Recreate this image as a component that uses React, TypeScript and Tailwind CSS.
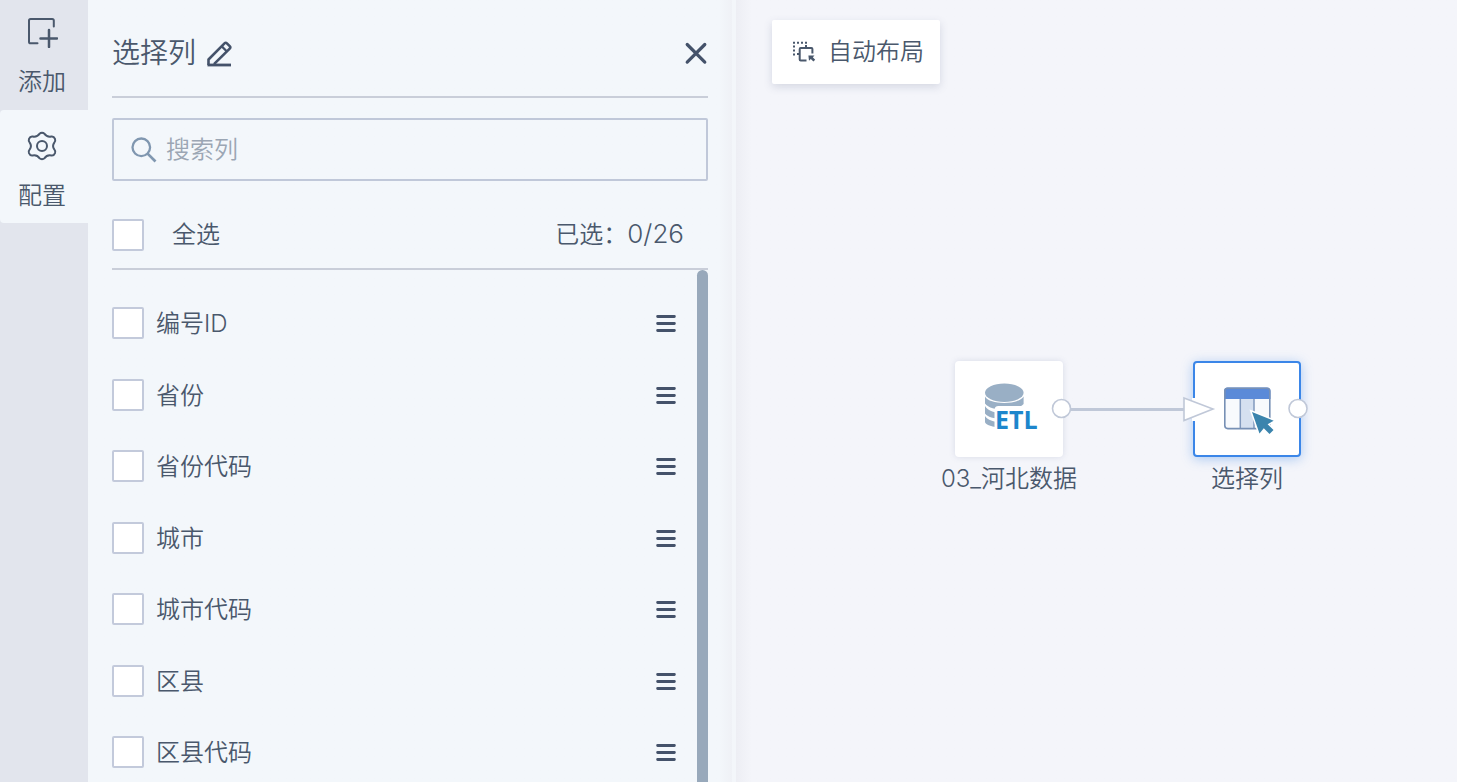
import { useState } from 'react';
import type { ReactNode } from 'react';

const columns = ['编号ID', '省份', '省份代码', '城市', '城市代码', '区县', '区县代码'];
const TOTAL = 26;

const checkboxClass =
  'size-8 shrink-0 appearance-none rounded-xs border-2 border-[#c3cadb] bg-white checked:border-[#2f80ed] checked:bg-[#2f80ed]';

const AddIcon = () => (
  <svg className="size-8" viewBox="0 0 32 32" fill="none" stroke="#4a586c" strokeLinecap="round">
    <path d="M11.5 27.3H4.6Q3 27.3 3 25.7V4.5Q3 2.9 4.6 2.9H26.2Q27.8 2.9 27.8 4.5V10.6" strokeWidth="2" />
    <path d="M23 14V31M14.5 22.4H31" strokeWidth="2.5" />
  </svg>
);

const GearIcon = () => (
  <svg className="size-8" viewBox="0 0 32 32" fill="none" stroke="#4a586c" strokeWidth="2" strokeLinejoin="round">
    <path d="M13.7 3.600C14.7 2.500 17.3 2.500 18.3 3.600C20.1 6.100 22.3 7.100 25.3 6.500C27 6.200 28.2 7 29 8.900C29.600 10.500 29.300 11.500 28.300 12.600C26.700 14.800 26.700 17.200 28.300 19.400C29.300 20.500 29.600 21.500 29 23.100C28.200 25 27 25.800 25.300 25.500C22.300 24.900 20.100 25.900 18.300 28.400C17.300 29.500 14.700 29.500 13.700 28.400C11.900 25.900 9.700 24.900 6.700 25.500C5 25.800 3.800 25 3 23.100C2.400 21.500 2.700 20.500 3.700 19.400C5.300 17.200 5.300 14.800 3.700 12.600C2.700 11.500 2.400 10.500 3 8.900C3.800 7 5 6.200 6.700 6.500C9.700 7.100 11.900 6.100 13.700 3.600Z" />
    <circle cx="16" cy="16" r="5" />
  </svg>
);

const EditIcon = () => (
  <svg className="size-7" viewBox="0 0 28 28" fill="none" stroke="#44526a" strokeWidth="2.6" strokeLinejoin="round">
    <path d="M2.500 25V19.500L18.500 3.400Q19.700 2.200 20.900 3.400L23.700 6.200Q24.900 7.400 23.700 8.600L8 24.200" />
    <path d="M15.800 6.400L20.900 11.500" strokeWidth="2.200" />
    <path d="M1.500 25H25" strokeWidth="2.800" />
  </svg>
);

const CloseIcon = () => (
  <svg className="size-6" viewBox="0 0 24 24" stroke="#44526a" strokeWidth="3.2" strokeLinecap="round">
    <path d="M3.200 2.500L20.800 20.100M20.800 2.500L3.200 20.100" />
  </svg>
);

const SearchIcon = () => (
  <svg className="size-7 shrink-0" viewBox="0 0 28 28" fill="none" stroke="#8097b0" strokeWidth="2.3">
    <circle cx="11.3" cy="11.3" r="8.8" />
    <path d="M17.6 17.6L25.500 25.500" strokeWidth="2.7" />
  </svg>
);

const DragIcon = () => (
  <svg className="size-5" viewBox="0 0 20 20" stroke="#44526a" strokeWidth="2.8" strokeLinecap="round">
    <path d="M1.6 3.500H18.4M1.6 10.500H18.4M1.6 17.500H18.4" />
  </svg>
);

const LayoutIcon = () => (
  <svg className="size-6" viewBox="0 0 24 24" fill="none" stroke="#4a586c">
    <path d="M1 2.8H15.5" strokeWidth="2" strokeDasharray="2 2" />
    <path d="M2 5.5V16" strokeWidth="2" strokeDasharray="2 2" />
    <path d="M20.4 13.5V9Q20.4 8 19.4 8H8.7Q7.7 8 7.7 9V19.5Q7.7 20.5 8.7 20.5H14.5M14 5V8M5 14H7.7" strokeWidth="2" />
    <path d="M16.4 15.4L22.5 15.6L20.8 17.3L23.2 19.8L21.4 21.6L18.8 19L17 20.8Z" fill="#4a586c" stroke="none" />
  </svg>
);

const EtlIcon = () => (
  <svg className="h-12 w-14 overflow-visible" viewBox="0 0 56 48">
    <g fill="#99afc5">
      <ellipse cx="23.300" cy="7.800" rx="19.300" ry="9.200" />
      <path d="M4 11.500C8 20 38 20 42.600 11.500V19C36 27 10 27 4 18.500Z" />
      <path d="M4 21C8 28 22 29.500 32 27V32C22 35 8 34 4 28.500Z" />
      <path d="M4 31C7 35.500 14 37.500 22 37V42.500C14 43 4 40 4 37Z" />
    </g>
    <rect x="13.500" y="21" width="44" height="27" rx="4" fill="#fff" />
    <text x="14" y="44" fill="#1d86cc" className="font-['Open_Sans',sans-serif] text-[25px] font-bold">
      ETL
    </text>
  </svg>
);

const SelectColumnsIcon = () => (
  <svg className="h-12 w-14 overflow-visible" viewBox="0 0 56 48">
    <rect x="6" y="3" width="45" height="41" rx="3" fill="#f8fafd" />
    <rect x="21" y="12" width="14" height="32" fill="#d5e0f0" />
    <path d="M5 14V6Q5 2.5 8.5 2.5H48Q51.500 2.500 51.500 6V14Z" fill="#5b8ad8" />
    <path d="M21.300 14V43M35 14V43" stroke="#8199bd" strokeWidth="1.500" />
    <rect x="5.800" y="3.200" width="45" height="40.400" rx="3" fill="none" stroke="#7790b5" strokeWidth="1.600" />
    <path
      d="M33 27L54.700 35.700L48.600 39.200L54.500 45L50.500 49L44.800 43.200L40.500 48.500Z"
      fill="#3b84ad"
      stroke="#fff"
      strokeWidth="3"
      paintOrder="stroke"
    />
  </svg>
);

type NodeProps = {
  className: string;
  cardClass: string;
  label: string;
  children: ReactNode;
};

const FlowNode = ({ className, cardClass, label, children }: NodeProps) => (
  <div className={`absolute top-[361px] flex w-[148px] flex-col items-center ${className}`}>
    <div className={`flex h-24 w-[108px] items-center justify-center rounded-sm bg-white ${cardClass}`}>{children}</div>
    <span className="mt-1 leading-9 whitespace-nowrap">{label}</span>
  </div>
);

export default function App() {
  const [selected, setSelected] = useState<string[]>([]);
  const [search, setSearch] = useState('');

  const toggle = (name: string) =>
    setSelected((prev) => (prev.includes(name) ? prev.filter((n) => n !== name) : [...prev, name]));
  const allSelected = selected.length === columns.length;

  return (
    <div className="flex h-screen overflow-hidden bg-[#f4f5fa] font-['Inter','Noto_Sans_CJK_SC',sans-serif] text-2xl font-[350] text-[#4a586c]">
      {/* Side tabs */}
      <nav className="flex w-[88px] shrink-0 flex-col bg-[#e2e5ed]">
        <button className="flex h-[110px] flex-col items-center gap-[18px] pt-4 pr-1">
          <AddIcon />
          <span>添加</span>
        </button>
        <button className="flex h-[113px] flex-col items-center gap-[18px] rounded-l-sm bg-[#f3f7fb] pt-5 pr-1">
          <GearIcon />
          <span>配置</span>
        </button>
      </nav>

      {/* Config panel */}
      <section className="flex w-[644px] shrink-0 flex-col bg-linear-to-r from-[#f3f7fb] from-98% to-[#eff1f6] px-6">
        <header className="flex h-[98px] shrink-0 items-center border-b-2 border-[#c9ced9] pt-3">
          <h1 className="text-[28px]">选择列</h1>
          <button className="ml-2.5" aria-label="编辑">
            <EditIcon />
          </button>
          <button className="ml-auto" aria-label="关闭">
            <CloseIcon />
          </button>
        </header>

        <label className="mt-5 flex h-[63px] shrink-0 items-center gap-2 rounded-xs border-2 border-[#c0c8d9] px-4">
          <SearchIcon />
          <input
            className="min-w-0 flex-1 bg-transparent outline-none placeholder:text-[#9ba6b4]"
            placeholder="搜索列"
            aria-label="搜索列"
            value={search}
            onChange={(e) => setSearch(e.target.value)}
          />
        </label>

        <div className="flex h-[89px] shrink-0 items-center justify-between border-b-2 border-[#c9ced9] pt-5 pr-6">
          <label className="flex items-center gap-7">
            <input
              type="checkbox"
              className={checkboxClass}
              checked={allSelected}
              onChange={() => setSelected(allSelected ? [] : columns)}
            />
            全选
          </label>
          <span>
            已选：
            <span className="text-[26px]">
              {selected.length}/{TOTAL}
            </span>
          </span>
        </div>

        <div className="flex min-h-0 flex-1">
          <ul className="min-w-0 flex-1 overflow-hidden pt-[17px] pr-[21px]">
            {columns
              .filter((name) => name.includes(search))
              .map((name) => (
                <li key={name} className="flex h-[71px] items-center justify-between odd:h-[72px]">
                  <label className="flex items-center gap-3">
                    <input
                      type="checkbox"
                      className={checkboxClass}
                      checked={selected.includes(name)}
                      onChange={() => toggle(name)}
                    />
                    <span className="pt-0.5">{name}</span>
                  </label>
                  <button aria-label="拖动排序">
                    <DragIcon />
                  </button>
                </li>
              ))}
          </ul>
          {/* Scrollbar thumb */}
          <div className="w-[11px] rounded-t-full bg-[#98a9bb]"></div>
        </div>
      </section>

      <div className="w-1 shrink-0 bg-[#f3f6fa]"></div>

      {/* Flow canvas */}
      <main className="relative min-w-0 flex-1 bg-linear-to-r from-[#edeef4] to-[#f4f5fa] to-[16px] pt-5 pl-9">
        <button className="flex h-16 items-center gap-3 rounded-xs bg-white pr-4 pl-5 shadow-[0_3px_8px_rgba(70,85,120,0.18)]">
          <LayoutIcon />
          自动布局
        </button>

        <FlowNode className="left-[199px]" cardClass="shadow-[0_0_6px_rgba(90,105,150,0.18)]" label="03_河北数据">
          <EtlIcon />
        </FlowNode>
        <FlowNode
          className="left-[437px]"
          cardClass="border-2 border-[#3b86e8] shadow-[0_2px_12px_rgba(59,134,232,0.4)]"
          label="选择列"
        >
          <SelectColumnsIcon />
        </FlowNode>

        {/* Ports and the link between the nodes */}
        <svg className="pointer-events-none absolute top-[391px] left-[310px] h-9 w-[268px]" viewBox="0 0 268 36" fill="#fff" stroke="#c0c8d8">
          <path d="M24 18.500H138" strokeWidth="3" />
          <circle cx="15.500" cy="17.500" r="9" strokeWidth="1.600" />
          <path d="M146 7H150V30H146Z" stroke="none" />
          <path d="M138 7L167 18L138 29.500Z" strokeWidth="1.600" />
          <circle cx="252" cy="17.500" r="9" strokeWidth="1.600" />
        </svg>
      </main>
    </div>
  );
}
